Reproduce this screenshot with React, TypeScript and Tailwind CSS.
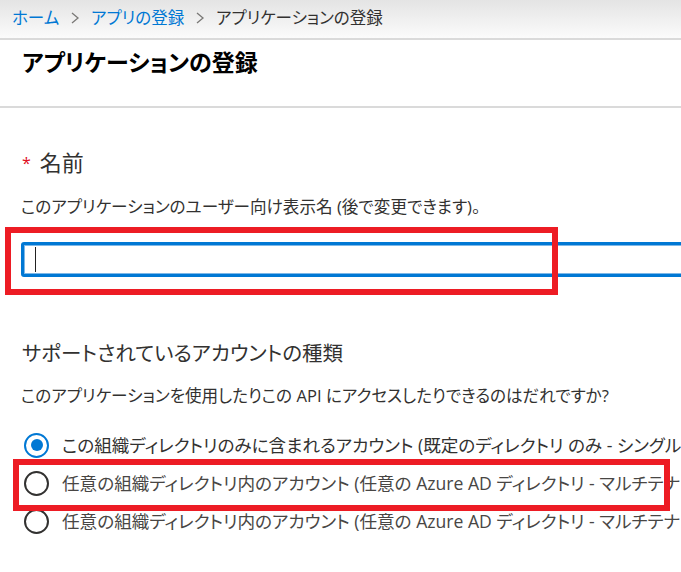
import React from 'react';

const font = "font-['Segoe_UI','Open_Sans','Noto_Sans_CJK_JP',sans-serif] [font-feature-settings:'palt']";

const Chevron = () => (
    <svg width="10" height="14" viewBox="0 0 10 14" className="mx-[11px]">
        <path d="M2 2 L8 7 L2 12" fill="none" stroke="#7a7876" strokeWidth="1.3"/>
    </svg>
);

const Radio = ({checked, label}: { checked?: boolean; label: string }) => (
    <div className="flex items-center h-[38px] whitespace-nowrap">
        <span
            className={`ml-[24px] w-[25px] h-[25px] rounded-full border-2 flex items-center justify-center shrink-0 ${checked ? 'border-[#0078d4]' : 'border-[#323130]'}`}>
            {checked && <span className="w-[12px] h-[12px] rounded-full bg-[#0078d4]"/>}
        </span>
        <span className={`ml-[13px] text-[17.6px] ${checked ? 'text-[#323130]' : 'text-[#484644]'}`}>{label}</span>
    </div>
);

export default function App() {
    return (
        <div className={`w-[681px] h-[572px] overflow-hidden bg-white text-[#323130] ${font}`}>
            <div
                className="h-[40px] flex items-center pl-[12px] pb-[2px] bg-gradient-to-b from-[#e4e4e4] to-[#fbfbfb] border-b-2 border-[#dadada] text-[16.5px] whitespace-nowrap">
                <span className="text-[#0078d4]">ホーム</span>
                <Chevron/>
                <span className="text-[#0078d4]">アプリの登録</span>
                <Chevron/>
                <span className="text-[#323130]">アプリケーションの登録</span>
            </div>
            <div className="h-[68px] border-b-2 border-[#dadada] pl-[22px] pt-[7px]">
                <h1 className="text-[23px] leading-[30px] font-bold text-black">アプリケーションの登録</h1>
            </div>

            <div className="w-[760px]">
                <div className="mt-[40px] pl-[22px] flex items-start h-[28px]">
                    <span className="text-[#e00b1c] text-[16px] leading-[18px] mt-[6px]">*</span>
                    <span className="ml-[9px] text-[22px] leading-[28px]">名前</span>
                </div>
                <p className="mt-[19px] pl-[21px] text-[16.6px] leading-[24px] whitespace-nowrap">このアプリケーションのユーザー向け表示名 (後で変更できます)。</p>

                <div className="relative mt-[23px] ml-[21px]">
                    <div
                        className="h-[35px] border-[3px] border-[#0078d4] rounded-[3px] shadow-[inset_0_0_0_1px_#7db8e8] flex items-center pl-[11px]">
                        <span className="w-px h-[25px] bg-[#222]"/>
                    </div>
                    <div
                        className="absolute left-[-16px] top-[-15px] w-[553px] h-[68px] border-[6px] border-[#ed1c24]"/>
                </div>

                <h2 className="mt-[62px] pl-[22px] text-[20.5px] leading-[28px] font-normal whitespace-nowrap">サポートされているアカウントの種類</h2>
                <p className="mt-[17px] pl-[21px] text-[16.6px] leading-[24px] whitespace-nowrap">このアプリケーションを使用したりこの API にアクセスしたりできるのはだれですか?</p>

                <div className="mt-[18px]">
                    <Radio checked label="この組織ディレクトリのみに含まれるアカウント (既定のディレクトリ のみ - シングル テナント)"/>
                    <div className="relative">
                        <Radio label="任意の組織ディレクトリ内のアカウント (任意の Azure AD ディレクトリ - マルチテナント)"/>
                        <div
                            className="absolute left-[13px] top-[-5px] w-[657px] h-[52px] border-[6px] border-[#ed1c24]"/>
                    </div>
                    <Radio label="任意の組織ディレクトリ内のアカウント (任意の Azure AD ディレクトリ - マルチテナント)"/>
                </div>
            </div>
        </div>
    );
}
